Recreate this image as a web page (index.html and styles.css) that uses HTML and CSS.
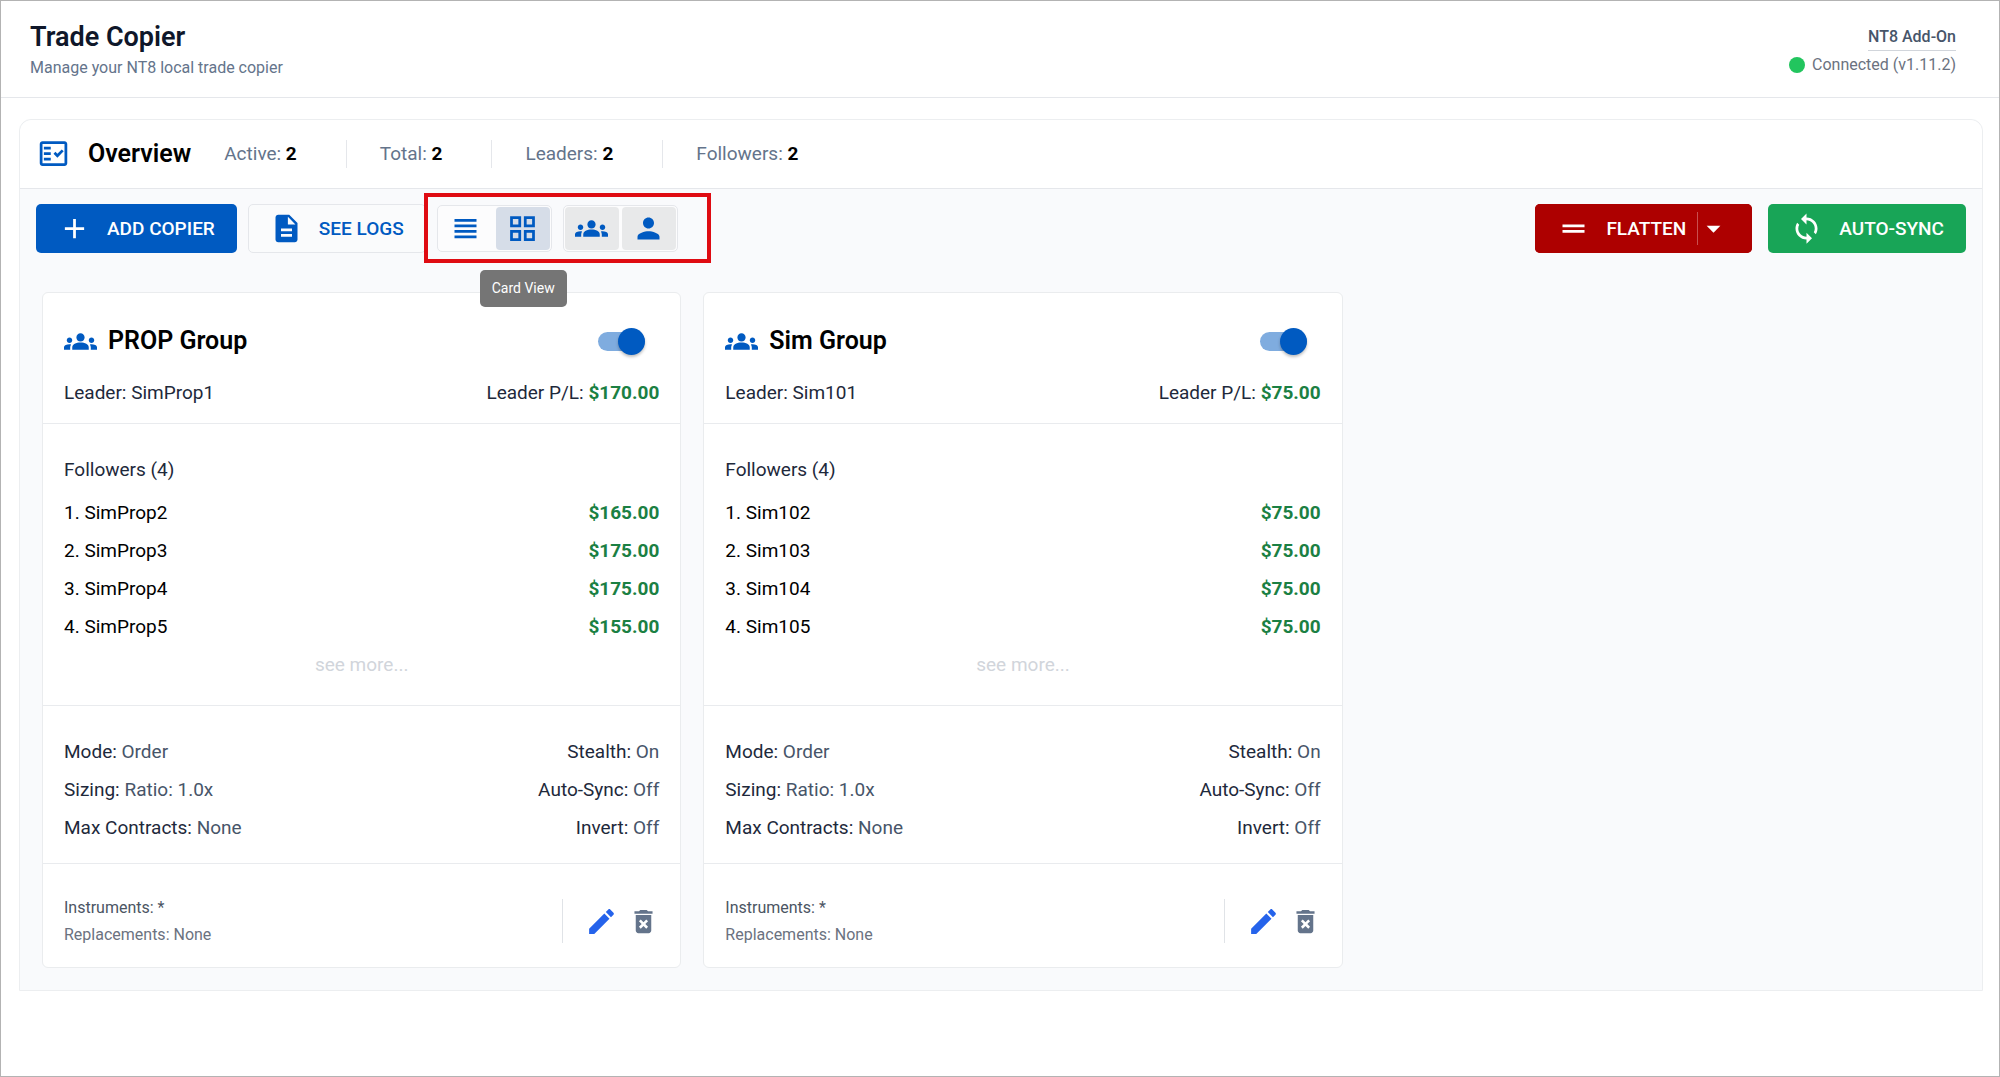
FILE: index.html
```html
<!DOCTYPE html>
<html lang="en">
<head>
  <meta charset="UTF-8">
  <meta name="viewport" content="width=device-width, initial-scale=1.0">
  <title>Trade Copier</title>
  <link rel="stylesheet" href="styles.css">
</head>
<body>
  <svg class="sprite" aria-hidden="true">
    <symbol id="fact-check" viewBox="0 0 24 24">
      <path d="M20 3H4c-1.100 0-2 .9-2 2v14c0 1.100.9 2 2 2h16c1.100 0 2-.9 2-2V5c0-1.100-.9-2-2-2zm0 16H4V5h16v14z"/>
      <path d="M19.410 10.420 17.990 9l-3.170 3.170-1.410-1.420L12 12.160 14.820 15zM5 7h5v2H5zM5 11h5v2H5zM5 15h5v2H5z"/>
    </symbol>
    <symbol id="add" viewBox="0 0 24 24"><path d="M19 13h-6v6h-2v-6H5v-2h6V5h2v6h6v2z"/></symbol>
    <symbol id="file" viewBox="0 0 24 24"><path d="M14 2H6c-1.100 0-1.990.9-1.990 2L4 20c0 1.100.89 2 1.990 2H18c1.100 0 2-.9 2-2V8l-6-6zm2 16H8v-2h8v2zm0-4H8v-2h8v2zm-3-5V3.500L18.500 9H13z"/></symbol>
    <symbol id="list" viewBox="0 0 24 24"><path d="M4 15h16v-2H4v2zm0 4h16v-2H4v2zm0-8h16V9H4v2zm0-6v2h16V5H4z"/></symbol>
    <symbol id="grid" viewBox="0 0 24 24"><path d="M3 3v8h8V3H3zm6 6H5V5h4v4zm-6 4v8h8v-8H3zm6 6H5v-4h4v4zm4-16v8h8V3h-8zm6 6h-4V5h4v4zm-6 4v8h8v-8h-8zm6 6h-4v-4h4v4z"/></symbol>
    <symbol id="groups" viewBox="0 0 24 24"><path d="M12 12.750c1.630 0 3.070.39 4.240.9 1.080.48 1.760 1.560 1.760 2.730V18H6v-1.610c0-1.180.68-2.260 1.760-2.730 1.170-.52 2.610-.91 4.240-.91zM4 13c1.100 0 2-.9 2-2s-.9-2-2-2-2 .9-2 2 .9 2 2 2zm1.130 1.100c-.37-.06-.74-.1-1.130-.1-.99 0-1.930.21-2.780.58C.48 14.900 0 15.620 0 16.430V18h4.500v-1.610c0-.83.23-1.610.63-2.290zM20 13c1.100 0 2-.9 2-2s-.9-2-2-2-2 .9-2 2 .9 2 2 2zm4 3.430c0-.81-.48-1.530-1.220-1.850-.85-.37-1.790-.58-2.780-.58-.39 0-.76.04-1.130.1.4.68.63 1.460.63 2.290V18H24v-1.570zM12 6c1.660 0 3 1.340 3 3s-1.340 3-3 3-3-1.340-3-3 1.340-3 3-3z"/></symbol>
    <symbol id="person" viewBox="0 0 24 24"><path d="M12 12c2.210 0 4-1.790 4-4s-1.790-4-4-4-4 1.790-4 4 1.790 4 4 4zm0 2c-2.670 0-8 1.340-8 4v2h16v-2c0-2.660-5.330-4-8-4z"/></symbol>
    <symbol id="flatten" viewBox="0 0 24 24"><path d="M20 9H4v2h16V9zM4 15h16v-2H4v2z"/></symbol>
    <symbol id="caret" viewBox="0 0 24 24"><path d="M7 10l5 5 5-5z"/></symbol>
    <symbol id="sync" viewBox="0 0 24 24"><path d="M12 4V1L8 5l4 4V6c3.310 0 6 2.690 6 6 0 1.010-.25 1.970-.7 2.800l1.460 1.460C19.540 15.030 20 13.570 20 12c0-4.420-3.580-8-8-8zm0 14c-3.310 0-6-2.690-6-6 0-1.010.25-1.970.7-2.800L5.240 7.740C4.460 8.970 4 10.430 4 12c0 4.420 3.580 8 8 8v3l4-4-4-4v3z"/></symbol>
    <symbol id="edit" viewBox="0 0 24 24"><path d="M3 17.250V21h3.750L17.810 9.940l-3.750-3.750L3 17.250zM20.710 7.040c.39-.39.39-1.020 0-1.410l-2.340-2.340c-.39-.39-1.020-.39-1.410 0l-1.830 1.830 3.750 3.750 1.830-1.830z"/></symbol>
    <symbol id="trash" viewBox="0 0 24 24"><path d="M6 19c0 1.100.9 2 2 2h8c1.100 0 2-.9 2-2V7H6v12zm2.460-7.120l1.410-1.410L12 12.590l2.120-2.120 1.410 1.410L13.410 14l2.120 2.120-1.410 1.410L12 15.410l-2.120 2.120-1.410-1.410L10.590 14l-2.130-2.120zM15.500 4l-1-1h-5l-1 1H5v2h14V4z"/></symbol>
  </svg>

  <header class="page-header">
    <div>
      <h1>Trade Copier</h1>
      <p class="subtitle">Manage your NT8 local trade copier</p>
    </div>
    <div class="addon">
      <span class="addon-name">NT8 Add-On</span>
      <span class="addon-status"><span class="dot"></span>Connected (v1.11.2)</span>
    </div>
  </header>

  <main class="panel">
    <div class="overview">
      <svg class="icon"><use href="#fact-check"/></svg>
      <h2>Overview</h2>
      <ul class="stats">
        <li>Active: <b>2</b></li>
        <li>Total: <b>2</b></li>
        <li>Leaders: <b>2</b></li>
        <li>Followers: <b>2</b></li>
      </ul>
    </div>

    <div class="toolbar">
      <button class="btn primary"><svg class="icon"><use href="#add"/></svg>ADD COPIER</button>
      <button class="btn outline"><svg class="icon"><use href="#file"/></svg>SEE LOGS</button>
      <div class="view-options">
        <div class="toggle-group">
          <button class="toggle" aria-label="List View"><svg class="icon"><use href="#list"/></svg></button>
          <button class="toggle selected" aria-label="Card View" aria-describedby="view-tip"><svg class="icon"><use href="#grid"/></svg></button>
          <span class="tooltip" id="view-tip" role="tooltip">Card View</span>
        </div>
        <div class="toggle-group">
          <button class="toggle on" aria-label="Groups"><svg class="icon"><use href="#groups"/></svg></button>
          <button class="toggle on" aria-label="Accounts"><svg class="icon"><use href="#person"/></svg></button>
        </div>
      </div>
      <div class="actions">
        <div class="split">
          <button class="btn danger"><svg class="icon"><use href="#flatten"/></svg>FLATTEN</button>
          <button class="btn danger more" aria-label="Flatten options"><svg class="icon"><use href="#caret"/></svg></button>
        </div>
        <button class="btn success"><svg class="icon"><use href="#sync"/></svg>AUTO-SYNC</button>
      </div>
    </div>

    <div class="cards">
      <article class="card">
        <div class="card-header">
          <div class="card-title">
            <svg class="icon"><use href="#groups"/></svg>
            <h3>PROP Group</h3>
            <input type="checkbox" class="switch" aria-label="Enable PROP Group" checked>
          </div>
          <div class="row">
            <span>Leader: SimProp1</span>
            <span>Leader P/L: <b class="profit">$170.00</b></span>
          </div>
        </div>
        <div class="followers">
          <h4>Followers (4)</h4>
          <ul>
            <li class="row"><span>1. SimProp2</span><b class="profit">$165.00</b></li>
            <li class="row"><span>2. SimProp3</span><b class="profit">$175.00</b></li>
            <li class="row"><span>3. SimProp4</span><b class="profit">$175.00</b></li>
            <li class="row"><span>4. SimProp5</span><b class="profit">$155.00</b></li>
          </ul>
          <a href="#" class="see-more">see more...</a>
        </div>
        <div class="settings">
          <div class="row"><span>Mode: <em>Order</em></span><span>Stealth: <em>On</em></span></div>
          <div class="row"><span>Sizing: <em>Ratio: 1.0x</em></span><span>Auto-Sync: <em>Off</em></span></div>
          <div class="row"><span>Max Contracts: <em>None</em></span><span>Invert: <em>Off</em></span></div>
        </div>
        <div class="card-footer">
          <div class="notes">
            <p class="instruments">Instruments: *</p>
            <p>Replacements: None</p>
          </div>
          <div class="card-actions">
            <button class="icon-btn edit" aria-label="Edit PROP Group"><svg class="icon"><use href="#edit"/></svg></button>
            <button class="icon-btn delete" aria-label="Delete PROP Group"><svg class="icon"><use href="#trash"/></svg></button>
          </div>
        </div>
      </article>

      <article class="card">
        <div class="card-header">
          <div class="card-title">
            <svg class="icon"><use href="#groups"/></svg>
            <h3>Sim Group</h3>
            <input type="checkbox" class="switch" aria-label="Enable Sim Group" checked>
          </div>
          <div class="row">
            <span>Leader: Sim101</span>
            <span>Leader P/L: <b class="profit">$75.00</b></span>
          </div>
        </div>
        <div class="followers">
          <h4>Followers (4)</h4>
          <ul>
            <li class="row"><span>1. Sim102</span><b class="profit">$75.00</b></li>
            <li class="row"><span>2. Sim103</span><b class="profit">$75.00</b></li>
            <li class="row"><span>3. Sim104</span><b class="profit">$75.00</b></li>
            <li class="row"><span>4. Sim105</span><b class="profit">$75.00</b></li>
          </ul>
          <a href="#" class="see-more">see more...</a>
        </div>
        <div class="settings">
          <div class="row"><span>Mode: <em>Order</em></span><span>Stealth: <em>On</em></span></div>
          <div class="row"><span>Sizing: <em>Ratio: 1.0x</em></span><span>Auto-Sync: <em>Off</em></span></div>
          <div class="row"><span>Max Contracts: <em>None</em></span><span>Invert: <em>Off</em></span></div>
        </div>
        <div class="card-footer">
          <div class="notes">
            <p class="instruments">Instruments: *</p>
            <p>Replacements: None</p>
          </div>
          <div class="card-actions">
            <button class="icon-btn edit" aria-label="Edit Sim Group"><svg class="icon"><use href="#edit"/></svg></button>
            <button class="icon-btn delete" aria-label="Delete Sim Group"><svg class="icon"><use href="#trash"/></svg></button>
          </div>
        </div>
      </article>
    </div>
  </main>
</body>
</html>
```

FILE: styles.css
```css
* {
  box-sizing: border-box;
}

body {
  margin: 0;
  min-height: 100vh;
  border: 1px solid #b3b3b3;
  font-family: Roboto, "Liberation Sans", sans-serif;
  font-size: 19px;
  color: #1e293b;
  background-color: #fff;
}

h1, h2, h3, h4, p, ul {
  margin: 0;
  padding: 0;
}

ul {
  list-style: none;
}

button {
  font-family: inherit;
  font-size: 19px;
  cursor: pointer;
}

.sprite {
  display: none;
}

.icon {
  width: 33px;
  height: 33px;
  flex-shrink: 0;
  fill: currentColor;
}

/* header */
.page-header {
  display: flex;
  justify-content: space-between;
  padding: 19px 43px 16px 29px;
  border-bottom: 1px solid #e5e7eb;
}

.page-header h1 {
  font-size: 27px;
  font-weight: 600;
  line-height: 34px;
  color: #0f172a;
}

.subtitle {
  font-size: 16px;
  line-height: 27px;
  color: #64748b;
}

.addon {
  display: flex;
  flex-direction: column;
  align-items: flex-end;
  font-size: 16px;
  line-height: 27px;
  padding-top: 3px;
}

.addon-name {
  font-weight: 500;
  color: #475569;
  border-bottom: 1px solid #d1d5db;
}

.addon-status {
  display: flex;
  align-items: center;
  gap: 7px;
  color: #6b7280;
}

.dot {
  width: 16px;
  height: 16px;
  border-radius: 50%;
  background-color: #22c55e;
}

/* overview panel */
.panel {
  margin: 21px 16px 0 18px;
  border: 1px solid #eceef0;
  border-radius: 12px 12px 0 0;
  background-color: #f9fafc;
}

.overview {
  display: flex;
  align-items: center;
  height: 69px;
  padding: 0 17px 1px;
  background-color: #fff;
  border-bottom: 1px solid #e5e7eb;
  border-radius: 12px 12px 0 0;
}

.overview .icon {
  color: #005ac1;
}

.overview h2 {
  margin: 0 33px 0 18px;
  font-size: 25px;
  font-weight: 600;
  color: #000;
}

.stats {
  display: flex;
}

.stats li {
  padding-right: 49px;
  line-height: 28px;
  color: #64748b;
}

.stats li + li {
  padding-left: 33px;
  border-left: 1px solid #e5e7eb;
}

.stats b {
  font-weight: 700;
  color: #000;
}

/* toolbar */
.toolbar {
  display: flex;
  align-items: center;
  gap: 11px;
  padding: 15px 16px 0;
}

.btn {
  display: flex;
  align-items: center;
  gap: 16px;
  height: 49px;
  padding: 0 22px;
  border: none;
  border-radius: 5px;
  font-weight: 500;
  color: #fff;
}

.btn.primary {
  background-color: #005ac1;
}

.btn.outline {
  padding: 0 21px;
  background-color: #fafbfc;
  border: 1px solid #e5e7eb;
  color: #005ac1;
}

.btn.danger {
  background-color: #ad0000;
}

.btn.success {
  background-color: #18a557;
}

.view-options {
  position: relative;
  display: flex;
  gap: 11px;
}

/* frame around the view options */
.view-options::after {
  content: "";
  position: absolute;
  inset: -12px -33px -11px -13px;
  border: 4px solid #df0b12;
  pointer-events: none;
}

.toggle-group {
  position: relative;
  display: flex;
  gap: 3px;
  padding: 1px;
  border: 1px solid #e5e7eb;
  border-radius: 5px;
  background-color: #fcfcfd;
}

.toggle {
  display: flex;
  align-items: center;
  justify-content: center;
  width: 54px;
  height: 43px;
  padding: 0;
  border: none;
  border-radius: 4px;
  background: none;
  color: #005ac1;
}

.toggle.selected {
  background-color: #d6dde8;
}

.toggle.on {
  background-color: #e8e9ea;
}

.tooltip {
  position: absolute;
  top: 64px;
  left: 42px;
  z-index: 1;
  padding: 0 12px;
  border-radius: 5px;
  background-color: #757575;
  color: #fff;
  font-size: 14px;
  line-height: 37px;
  white-space: nowrap;
}

.actions {
  display: flex;
  gap: 16px;
  margin-left: auto;
}

.split {
  display: flex;
  border-radius: 5px;
  background-color: #ad0000;
}

.split .btn {
  padding-right: 11px;
}

.split .more {
  position: relative;
  padding: 0 22px 0 0;
}

.split .more::before {
  content: "";
  position: absolute;
  top: 8px;
  bottom: 8px;
  left: 0;
  border-left: 1px solid #c94f4f;
}

/* cards */
.cards {
  display: flex;
  flex-wrap: wrap;
  gap: 22px;
  padding: 39px 22px 22px;
}

.card {
  flex: 0 0 calc(100% / 3);
  min-width: 440px;
  border: 1px solid #eaecee;
  border-radius: 6px;
  background-color: #fff;
}

.row {
  display: flex;
  justify-content: space-between;
  line-height: 38px;
}

.profit {
  font-weight: 700;
  color: #1b8043;
}

.card-header {
  padding: 29px 21px 11px;
  border-bottom: 1px solid #e9ebee;
}

.card-title {
  display: flex;
  align-items: center;
  gap: 11px;
  margin-bottom: 14px;
}

.card-title .icon {
  color: #005ac1;
}

.card-title h3 {
  font-size: 25px;
  font-weight: 600;
  line-height: 38px;
  color: #000;
}

.switch {
  appearance: none;
  position: relative;
  width: 47px;
  height: 19px;
  margin: 0 14px 0 auto;
  border-radius: 10px;
  background-color: #7facdf;
  cursor: pointer;
}

.switch::before {
  content: "";
  position: absolute;
  top: -4px;
  right: 0;
  width: 27px;
  height: 27px;
  border-radius: 50%;
  background-color: #005ac1;
  box-shadow: 0 2px 3px rgba(0, 0, 0, 0.25);
}

.followers {
  padding: 27px 21px 21px;
  border-bottom: 1px solid #e9ebee;
}

.followers h4 {
  margin-bottom: 5px;
  font-size: 19px;
  font-weight: 400;
  line-height: 38px;
}

.followers .row {
  color: #000;
}

.see-more {
  display: block;
  line-height: 38px;
  text-align: center;
  text-decoration: none;
  color: #d1d5db;
}

.settings {
  padding: 27px 21px 16px;
  border-bottom: 1px solid #e9ebee;
}

.settings em {
  font-style: normal;
  color: #475569;
}

.card-footer {
  display: flex;
  justify-content: space-between;
  align-items: center;
  padding: 30px 21px 19px;
}

.notes {
  font-size: 16px;
  line-height: 27px;
  color: #6b7280;
}

.notes .instruments {
  color: #4b5563;
}

.card-actions {
  display: flex;
  align-items: center;
  gap: 10px;
  height: 44px;
  padding-left: 22px;
  border-left: 1px solid #e0e3e7;
}

.icon-btn {
  display: flex;
  padding: 0;
  border: none;
  background: none;
}

.edit {
  color: #2563eb;
}

.delete {
  color: #64748b;
}

.delete .icon {
  width: 31px;
  height: 31px;
}
```
